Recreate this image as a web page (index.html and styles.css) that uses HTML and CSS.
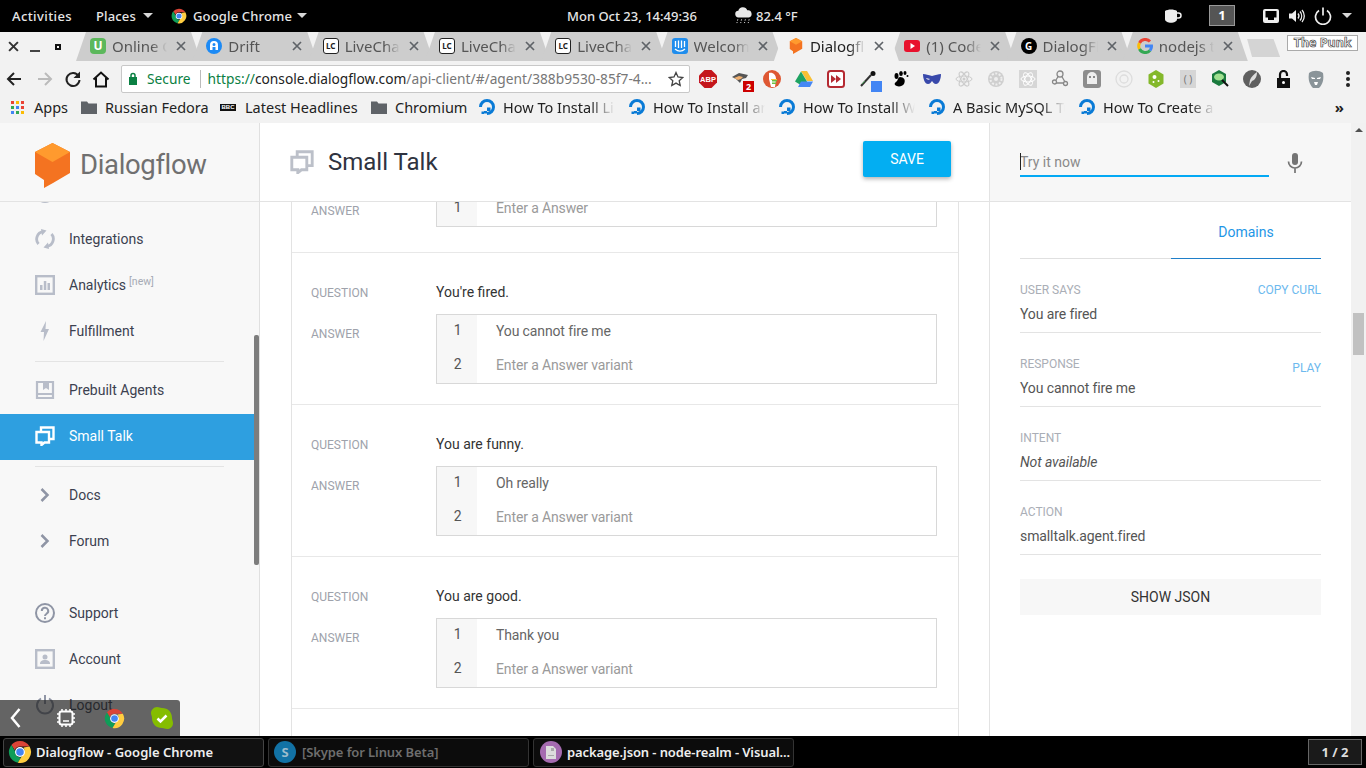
FILE: index.html
```html
<!DOCTYPE html>
<html lang="en">
<head>
<meta charset="utf-8">
<title>Dialogflow - Google Chrome</title>
<link rel="stylesheet" href="styles.css">
</head>
<body>
<svg class="sprite" xmlns="http://www.w3.org/2000/svg">
  <symbol id="chrome" viewBox="0 0 24 24">
    <path fill="#db4437" d="M12 1a11 11 0 0 1 9.5 5.5H12a5.5 5.5 0 0 0-5.2 3.7L3.4 5A11 11 0 0 1 12 1z"/>
    <path fill="#0f9d58" d="M3.4 5l4 6.9a5 5 0 0 0 5.6 5.6L9.800 22.800A11 11 0 0 1 3.400 5z"/>
    <path fill="#ffcd40" d="M21.500 6.500A11 11 0 0 1 9.800 22.800l4.700-7.900A5.500 5.500 0 0 0 15.500 7.500z"/>
    <circle cx="12" cy="12" r="5" fill="#fff"/><circle cx="12" cy="12" r="3.800" fill="#4285f4"/>
  </symbol>
  <symbol id="ocean" viewBox="0 0 18 18">
    <path fill="none" stroke="#0a7bd6" stroke-width="3" d="M9 15.500A6.500 6.500 0 1 0 2.500 9"/>
    <path fill="#0a7bd6" d="M9 9.500h3.500V13H9zM6 13h3v2.500H6zM3.500 13.500H6V16H3.500z"/>
  </symbol>
  <symbol id="folder" viewBox="0 0 16 14"><path fill="#5f6368" d="M0 1.500h6l1.500 2H16V14H0z"/></symbol>
  <symbol id="talk" viewBox="0 0 20 20">
    <path fill="none" stroke="currentColor" stroke-width="2.400" d="M6 5V1.500h12.500V13H15"/>
    <path fill="none" stroke="currentColor" stroke-width="2.400" d="M1.500 6H14v10.500H9.500L6.500 19v-2.500h-5z"/>
  </symbol>
  <symbol id="cross" viewBox="0 0 10 10"><path fill="none" stroke="#5f6368" stroke-width="1.700" d="M1 1l8 8M9 1L1 9"/></symbol>
  <symbol id="skypeg" viewBox="0 0 24 24"><path fill="currentColor" d="M7 1c2 0 3 1 5 1 6 0 10 4 10 10 0 2 1 3 1 5 0 4-3 6-6 6-2 0-3-1-5-1C6 22 2 18 2 12 2 10 1 9 1 7c0-3 3-6 6-6z"/></symbol>
</svg>

<header class="topbar">
  <div class="top-left">
    <span class="top-activities">Activities</span>
    <span class="top-places">Places<i class="caret"></i></span>
    <span class="top-app"><svg class="i16"><use href="#chrome"/></svg>Google Chrome<i class="caret caret-app"></i></span>
  </div>
  <div class="top-clock">Mon Oct 23, 14:49:36</div>
  <div class="top-weather">
    <svg class="i-weather" viewBox="0 0 20 18"><path fill="#e8e8e8" d="M5 11a3.500 3.500 0 0 1-.5-7A5 5 0 0 1 14 3.500 3.800 3.800 0 0 1 15.500 11z"/><path stroke="#ddd" stroke-dasharray="1.500 1.500" d="M4 13l-1 4M8 13l-1 4M12 13l-1 4M16 13l-1 4"/></svg>
    <span>82.4 °F</span>
  </div>
  <div class="top-right">
    <svg class="i-cup" viewBox="0 0 18 16"><path fill="#eee" d="M1 3c3-2 9-2 12 0v8c0 5-12 5-12 0z"/><path fill="none" stroke="#eee" stroke-width="1.500" d="M13 5h1.500a2 2 0 0 1 0 5H13"/></svg>
    <span class="workspace">1</span>
    <svg class="i-net" viewBox="0 0 16 16"><rect y="1" width="16" height="14" rx="2" fill="#eee"/><path fill="#000" d="M2.500 3h11v6.500H11V12H5V9.500H2.500z"/></svg>
    <svg class="i-vol" viewBox="0 0 16 16"><path fill="#eee" d="M0 5.500h3L7 2v12L3 10.500H0z"/><path fill="none" stroke="#eee" stroke-width="1.300" d="M9 5.500a4 4 0 0 1 0 5M11 3.500a7 7 0 0 1 0 9M13 2a9 9 0 0 1 0 12"/></svg>
    <svg class="i-pow" viewBox="0 0 18 18"><path fill="none" stroke="#eee" stroke-width="1.700" d="M5 3.500a7.500 7.500 0 1 0 8 0M9 .5v8"/></svg>
    <i class="caret"></i>
  </div>
</header>

<div class="tabstrip">
  <div class="win-controls">
    <svg class="ctl-x" viewBox="0 0 10 10"><path fill="none" stroke="#333" stroke-width="1.800" d="M1 1l8 8M9 1L1 9"/></svg>
    <span class="ctl-min"></span>
    <span class="ctl-max"></span>
  </div>
  <div class="tabs">
    <div class="tab"><span class="fav fav-u">U</span><span class="tab-title">Online Chat</span><svg class="close"><use href="#cross"/></svg></div>
    <div class="tab"><svg class="fav" viewBox="0 0 16 16"><circle cx="8" cy="8" r="8" fill="#1c8af5"/><path fill="#fff" d="M8 3a4 4 0 0 1 4 4v5H9.500V9h-3v3H4V7a4 4 0 0 1 4-4zm0 2a1.500 1.500 0 1 0 0 3 1.500 1.500 0 0 0 0-3z"/></svg><span class="tab-title">Drift</span><svg class="close"><use href="#cross"/></svg></div>
    <div class="tab"><span class="fav fav-lc">LC</span><span class="tab-title">LiveChat</span><svg class="close"><use href="#cross"/></svg></div>
    <div class="tab"><span class="fav fav-lc">LC</span><span class="tab-title">LiveChat</span><svg class="close"><use href="#cross"/></svg></div>
    <div class="tab"><span class="fav fav-lc">LC</span><span class="tab-title">LiveChat</span><svg class="close"><use href="#cross"/></svg></div>
    <div class="tab"><svg class="fav" viewBox="0 0 16 16"><rect width="16" height="16" rx="3" fill="#1f8ded"/><path fill="none" stroke="#fff" stroke-width="1.300" d="M3.500 3v6M6.500 2.500v7.500M9.500 2.500v7.500M12.500 3v6M3 11c3 2.500 7 2.500 10 0"/></svg><span class="tab-title">Welcome</span><svg class="close"><use href="#cross"/></svg></div>
    <div class="tab tab-active"><svg class="fav" viewBox="0 0 35 45"><path fill="#f47321" d="M17.500 0L35 9v21l-17 10L9 45v-8L0 31V9z"/><path fill="#ff9a2e" d="M17.500 0L35 9 17.500 19 0 9z"/></svg><span class="tab-title">Dialogflow</span><svg class="close"><use href="#cross"/></svg></div>
    <div class="tab"><svg class="fav" viewBox="0 0 16 16"><rect y="2" width="16" height="12" rx="3" fill="#e8112d"/><path fill="#fff" d="M6.500 5l4.500 3-4.500 3z"/></svg><span class="tab-title">(1) Code</span><svg class="close"><use href="#cross"/></svg></div>
    <div class="tab"><span class="fav fav-g">G</span><span class="tab-title">DialogFlow</span><svg class="close"><use href="#cross"/></svg></div>
    <div class="tab"><svg class="fav" viewBox="0 0 16 16"><path fill="none" stroke="#ea4335" stroke-width="3" d="M13 3.500A6.500 6.500 0 0 0 2.500 5"/><path fill="none" stroke="#fbbc05" stroke-width="3" d="M2.500 5a6.500 6.500 0 0 0 0 6"/><path fill="none" stroke="#34a853" stroke-width="3" d="M2.500 11A6.500 6.500 0 0 0 13 12.500"/><path fill="none" stroke="#4285f4" stroke-width="3" d="M13 12.500A6.500 6.500 0 0 0 14.500 8H8"/></svg><span class="tab-title">nodejs tutorial</span><svg class="close"><use href="#cross"/></svg></div>
  </div>
  <span class="newtab"></span>
  <span class="punk">The Punk</span>
</div>

<div class="toolbar">
  <span class="tool"><svg class="i18" viewBox="0 0 18 18"><path fill="none" stroke="#222" stroke-width="2" d="M16 9H3M9 3L3 9l6 6"/></svg></span>
  <span class="tool"><svg class="i18" viewBox="0 0 18 18"><path fill="none" stroke="#bbb" stroke-width="2" d="M2 9h13M9 3l6 6-6 6"/></svg></span>
  <span class="tool"><svg class="i18" viewBox="0 0 18 18"><path fill="none" stroke="#222" stroke-width="2" d="M14.500 6A6.500 6.500 0 1 0 15.500 10"/><path fill="#222" d="M16 1.500V8h-6.500z"/></svg></span>
  <span class="tool"><svg class="i18" viewBox="0 0 18 18"><path fill="none" stroke="#111" stroke-width="2" d="M1.500 9.500L9 2.500l7.500 7M4 8v8.500h10V8"/></svg></span>
  <div class="omnibox">
    <svg class="lock" viewBox="0 0 10 13"><path fill="#0b8043" d="M1 5h8v8H1z"/><path fill="none" stroke="#0b8043" stroke-width="1.500" d="M3 5V3.500a2 2 0 0 1 4 0V5"/></svg>
    <span class="secure">Secure</span>
    <span class="omni-sep"></span>
    <span class="url"><span class="url-https">https://</span><span class="url-host">console.dialogflow.com</span>/api-client/#/agent/388b9530-85f7-4...</span>
    <svg class="star" viewBox="0 0 16 16"><path fill="none" stroke="#444" stroke-width="1.300" d="M8 1.500l2 4.500 4.800.5-3.600 3.200 1 4.800L8 12.100l-4.200 2.400 1-4.800L1.200 6.500 6 6z"/></svg>
  </div>
  <div class="exts">
    <span class="ext"><svg class="i18x" viewBox="0 0 18 18"><path fill="#c4161c" d="M5.500 0h7L18 5.500v7L12.500 18h-7L0 12.500v-7z"/><text class="abp" x="9" y="12">ABP</text></svg></span>
    <span class="ext"><svg class="i18x" viewBox="0 0 18 18"><path fill="#555" d="M1 7l7-4 9 2-2 3-4 1-2 4-4-4z"/><path fill="#f0b070" d="M3 8l5-2 4 1-2 2-3 1z"/></svg><span class="badge">2</span></span>
    <span class="ext"><svg class="i18x" viewBox="0 0 18 18"><circle cx="9" cy="9" r="9" fill="#de5833"/><path fill="#fff" d="M6 3c4-1 7 2 7 6l-1 8H8L6 9z"/><path fill="#6cbf43" d="M9 10h5v1.500H9zM9 12.500h4V14H9z"/><path fill="#f5c33b" d="M8 9h6v1H8z"/></svg></span>
    <span class="ext"><svg class="i18x" viewBox="0 0 18 16"><path fill="#f8c034" d="M6 0h6l6 10h-6z"/><path fill="#1ea362" d="M6 0l6 10-3 5.500L0 10z" transform="translate(0 .5)"/><path fill="#4687f4" d="M3 16l3-5.500h12L15 16z"/></svg></span>
    <span class="ext"><svg class="i18x" viewBox="0 0 18 18"><rect x="1" y="1" width="16" height="16" rx="2.500" fill="#fff" stroke="#b52a32" stroke-width="2"/><path fill="#b52a32" d="M4 5l5 4-5 4zM9 5l5 4-5 4z"/></svg></span>
    <span class="ext ext-dropper"><svg class="i18x" viewBox="0 0 18 18"><path fill="none" stroke="#333" stroke-width="2" d="M2 16L12 5"/><path stroke="#3f8f4e" d="M3 14L6 11"/><circle cx="14" cy="3.500" r="2.500" fill="#111"/></svg><span class="blue-sq"></span></span>
    <span class="ext"><svg class="i18x" viewBox="0 0 18 18"><path fill="#000" d="M9 7c4 0 6 3 4 7-2 3-7 3-9 1-1-2 1-3 2-4s1-4 3-4z"/><ellipse cx="5.500" cy="6" rx="2" ry="3"/><ellipse cx="10" cy="3.500" rx="1.800" ry="2.500"/><ellipse cx="14" cy="3" rx="1.500" ry="2"/><circle cx="16.500" cy="6" r="1"/></svg></span>
    <span class="ext"><svg class="i18x" viewBox="0 0 18 12"><path fill="#3949ab" d="M0 1c3 0 5 1 9 2 4-1 6-2 9-2 0 5-2 10-5 10-2 0-3-2-4-3-1 1-2 3-4 3C2 11 0 6 0 1zm3 4c1 2 3 2 4 1zm12 0c-1 2-3 2-4 1z"/></svg></span>
    <span class="ext ext-faded"><svg class="i18x" viewBox="0 0 18 18"><g fill="none" stroke="#ccc"><ellipse cx="9" cy="9" rx="8" ry="3"/><ellipse cx="9" cy="9" rx="8" ry="3" transform="rotate(60 9 9)"/><ellipse cx="9" cy="9" rx="8" ry="3" transform="rotate(120 9 9)"/></g><circle cx="9" cy="9" r="1.500" fill="#ccc"/></svg></span>
    <span class="ext"><svg class="i18x" viewBox="0 0 18 18"><circle cx="9" cy="9" r="8" fill="#cfcfcf"/><circle cx="9" cy="9" r="5.500" fill="none" stroke="#eee" stroke-width="2" stroke-dasharray="2 1.500"/><circle cx="9" cy="9" r="2" fill="#eee"/></svg></span>
    <span class="ext"><svg class="i18x" viewBox="0 0 18 18"><rect width="18" height="18" fill="#d6d6d6"/><g fill="none" stroke="#fff"><ellipse cx="9" cy="9" rx="7" ry="3"/><ellipse cx="9" cy="9" rx="7" ry="3" transform="rotate(60 9 9)"/><ellipse cx="9" cy="9" rx="7" ry="3" transform="rotate(120 9 9)"/></g></svg></span>
    <span class="ext"><svg class="i18x" viewBox="0 0 18 18"><g fill="#f0f0f0" stroke="#888" stroke-width="1.300"><path d="M5 10L8 5M10 5l4 7M5 13h7" fill="none"/><circle cx="9" cy="4" r="3"/><circle cx="3.500" cy="12" r="2"/><circle cx="14.500" cy="13.500" r="2"/></g></svg></span>
    <span class="ext"><svg class="i18x" viewBox="0 0 18 18"><rect width="18" height="18" rx="3" fill="#8d8d8d"/><path fill="#eee" d="M4 14V7a5 5 0 0 1 10 0v7z"/><circle cx="7" cy="7" r="1" fill="#666"/><circle cx="11" cy="7" r="1" fill="#666"/></svg></span>
    <span class="ext"><svg class="i18x" viewBox="0 0 18 18"><g fill="none" stroke="#ddd" stroke-width="1.300"><circle cx="9" cy="9" r="8"/><circle cx="9" cy="9" r="4"/></g></svg></span>
    <span class="ext"><svg class="i18x" viewBox="0 0 18 18"><path fill="#84b82b" d="M9 0l7.500 4.500v9L9 18l-7.500-4.500v-9z"/><circle cx="7.500" cy="7" r="2" fill="#fff"/><circle cx="11.500" cy="11" r="1" fill="#fff"/><circle cx="6.500" cy="12" r="1" fill="#fff"/></svg></span>
    <span class="ext"><span class="ext-paren">( )</span></span>
    <span class="ext"><svg class="i18x" viewBox="0 0 18 18"><path fill="#1a7a3e" d="M8 0l7 4v8l-7 4-7-4V4z"/><ellipse cx="8" cy="7" rx="5" ry="3.500" fill="#9fe08f"/><path stroke="#111" stroke-width="2" d="M11 10l6 6"/></svg></span>
    <span class="ext"><svg class="i18x" viewBox="0 0 18 18"><circle cx="9" cy="9" r="9" fill="#5f5f5f"/><path fill="#ddd" d="M14 2c0 5-2 8-5 9l-3 5 1-6c1-3 4-6 7-8z"/></svg></span>
    <span class="ext"><svg class="i18x" viewBox="0 0 14 18"><path fill="#111" d="M0 8h13v10H0z"/><path fill="none" stroke="#111" stroke-width="2.200" d="M3 8V4.500a3.500 3.500 0 0 1 7 0V6"/><circle cx="6.500" cy="12.500" r="1.500" fill="#fff"/></svg></span>
    <span class="ext"><svg class="i18x" viewBox="0 0 16 18"><path fill="#8a9499" d="M1 3c4-3 10-3 14 0 1 6 0 11-4 15H5C1 14 0 9 1 3z"/><path fill="#fff" d="M3 7l4 1v1H4zM13 7l-4 1v1h3zM6 12h4l-1 3H7z"/></svg></span>
    <span class="ext"><span class="kebab"></span></span>
  </div>
</div>

<nav class="bookmarks">
  <span class="bm bm-apps"><svg class="apps" viewBox="0 0 13 13"><g fill="#ea4335"><rect width="3" height="3"/><rect x="10" width="3" height="3"/></g><rect x="5" width="3" height="3" fill="#fbbc05"/><rect y="5" width="3" height="3" fill="#34a853"/><rect x="5" y="5" width="3" height="3" fill="#4285f4"/><rect x="10" y="5" width="3" height="3" fill="#ea4335"/><rect y="10" width="3" height="3" fill="#4285f4"/><rect x="5" y="10" width="3" height="3" fill="#34a853"/><rect x="10" y="10" width="3" height="3" fill="#fbbc05"/></svg>Apps</span>
  <span class="bm bm-ru"><svg class="i-fold"><use href="#folder"/></svg>Russian Fedora</span>
  <span class="bm bm-bbc"><span class="bbc">BBC</span>Latest Headlines</span>
  <span class="bm bm-ch"><svg class="i-fold"><use href="#folder"/></svg>Chromium</span>
  <span class="bm bm-do"><svg class="i-do"><use href="#ocean"/></svg><span class="bm-fade">How To Install Linux</span></span>
  <span class="bm bm-do"><svg class="i-do"><use href="#ocean"/></svg><span class="bm-fade">How To Install and Use</span></span>
  <span class="bm bm-do"><svg class="i-do"><use href="#ocean"/></svg><span class="bm-fade">How To Install WordPress</span></span>
  <span class="bm bm-do"><svg class="i-do"><use href="#ocean"/></svg><span class="bm-fade">A Basic MySQL Tutorial</span></span>
  <span class="bm bm-do"><svg class="i-do"><use href="#ocean"/></svg><span class="bm-fade">How To Create a New</span></span>
  <span class="bm-more">»</span>
</nav>

<main class="page">
  <aside class="sidebar">
    <div class="brand">
      <svg class="logo" viewBox="0 0 35 45"><path fill="#f47321" d="M17.500 0L35 9v21l-17 10L9 45v-8L0 31V9z"/><path fill="#ff9a2e" d="M17.500 0L35 9 17.500 19 0 9z"/></svg>
      <span class="brand-name">Dialogflow</span>
    </div>
    <div class="nav-clip">
      <ul class="nav">
        <li class="nav-item"><svg class="nav-ic" viewBox="0 0 20 20"><circle cx="10" cy="10" r="9" fill="none" stroke="currentColor" stroke-width="2"/></svg>Training</li>
        <li class="nav-item"><svg class="nav-ic" viewBox="0 0 20 20"><path fill="none" stroke="currentColor" stroke-width="2.800" d="M3.500 15A7.500 7.500 0 0 1 8 2.700M16.500 5a7.500 7.500 0 0 1-4.500 12.300"/><path fill="currentColor" d="M6 0l5.500 1.500-4.500 5zM14 20l-5.500-1.500 4.500-5z"/></svg>Integrations</li>
        <li class="nav-item"><svg class="nav-ic" viewBox="0 0 20 20"><rect x="1.200" y="1.200" width="17.600" height="17.600" fill="none" stroke="currentColor" stroke-width="2.400"/><path fill="currentColor" d="M5 10h2.500v5H5zM8.800 6h2.500v9H8.800zM12.500 8H15v7h-2.500z"/></svg>Analytics<sup class="new">[new]</sup></li>
        <li class="nav-item"><svg class="nav-ic" viewBox="0 0 20 20"><path fill="currentColor" d="M11 0L5.500 11H9l-.5 9L14 8h-3.500z"/></svg>Fulfillment</li>
        <li class="nav-div nav-div-a"></li>
        <li class="nav-item nav-prebuilt"><svg class="nav-ic" viewBox="0 0 20 20"><path fill="none" stroke="currentColor" stroke-width="2.200" d="M2 2h16v16H2zM2 14h16"/><path fill="currentColor" d="M8 1h6v9l-3-2-3 2z"/></svg>Prebuilt Agents</li>
        <li class="nav-item nav-active"><svg class="nav-ic"><use href="#talk"/></svg>Small Talk</li>
        <li class="nav-div nav-div-b"></li>
        <li class="nav-item"><svg class="nav-ic nav-chev" viewBox="0 0 20 20"><path fill="none" stroke="currentColor" stroke-width="2.500" d="M6.500 4l6 6-6 6"/></svg>Docs</li>
        <li class="nav-item"><svg class="nav-ic nav-chev" viewBox="0 0 20 20"><path fill="none" stroke="currentColor" stroke-width="2.500" d="M6.500 4l6 6-6 6"/></svg>Forum</li>
        <li class="nav-item nav-support"><svg class="nav-ic nav-chev" viewBox="0 0 20 20"><circle cx="10" cy="10" r="9" fill="none" stroke="currentColor" stroke-width="2"/><path fill="none" stroke="currentColor" stroke-width="2" d="M6.800 8a3.200 3.200 0 1 1 4.800 2.700c-1 .7-1.600 1.200-1.600 2.300"/><path fill="currentColor" d="M9 14.300h2v2H9z"/></svg>Support</li>
        <li class="nav-item"><svg class="nav-ic" viewBox="0 0 20 20"><rect x="1.200" y="1.200" width="17.600" height="17.600" fill="none" stroke="currentColor" stroke-width="2.400"/><circle cx="10" cy="8" r="2.500" fill="currentColor"/><path fill="currentColor" d="M5 15c0-3 2-4 5-4s5 1 5 4z"/></svg>Account</li>
        <li class="nav-item"><svg class="nav-ic nav-chev" viewBox="0 0 20 20"><path fill="none" stroke="currentColor" stroke-width="2" d="M6 3.500a8 8 0 1 0 8 0M10 0v9"/></svg>Logout</li>
      </ul>
    </div>
    <span class="side-thumb"></span>
  </aside>

  <section class="main">
    <div class="main-head">
      <svg class="head-ic"><use href="#talk"/></svg>
      <h1 class="head-title">Small Talk</h1>
      <button class="save">SAVE</button>
    </div>
    <div class="main-clip">
      <div class="card">
        <div class="qa qa-first">
          <div class="qa-label qa-label-a">ANSWER</div>
          <div class="answers">
            <div class="ans"><span class="ans-n">1</span><span class="ans-ph">Enter a Answer</span></div>
          </div>
        </div>
        <div class="qa">
          <div class="qa-label qa-label-q">QUESTION</div><div class="qa-q">You're fired.</div>
          <div class="qa-label qa-label-a">ANSWER</div>
          <div class="answers">
            <div class="ans"><span class="ans-n">1</span><span class="ans-t">You cannot fire me</span></div>
            <div class="ans"><span class="ans-n">2</span><span class="ans-ph">Enter a Answer variant</span></div>
          </div>
        </div>
        <div class="qa">
          <div class="qa-label qa-label-q">QUESTION</div><div class="qa-q">You are funny.</div>
          <div class="qa-label qa-label-a">ANSWER</div>
          <div class="answers">
            <div class="ans"><span class="ans-n">1</span><span class="ans-t">Oh really</span></div>
            <div class="ans"><span class="ans-n">2</span><span class="ans-ph">Enter a Answer variant</span></div>
          </div>
        </div>
        <div class="qa">
          <div class="qa-label qa-label-q">QUESTION</div><div class="qa-q">You are good.</div>
          <div class="qa-label qa-label-a">ANSWER</div>
          <div class="answers">
            <div class="ans"><span class="ans-n">1</span><span class="ans-t">Thank you</span></div>
            <div class="ans"><span class="ans-n">2</span><span class="ans-ph">Enter a Answer variant</span></div>
          </div>
        </div>
        <div class="qa-tail"></div>
      </div>
    </div>
  </section>

  <aside class="tester">
    <div class="try">
      <div class="try-input"><span class="try-caret"></span>Try it now</div>
      <svg class="mic" viewBox="0 0 16 20"><rect x="5" y="0" width="6" height="12" rx="3" fill="#757575"/><path fill="none" stroke="#757575" stroke-width="1.700" d="M1.500 8.500a6.500 6.500 0 0 0 13 0M8 15v5"/></svg>
    </div>
    <div class="test-body">
      <div class="test-tabs"><span class="test-tab-blank"></span><span class="test-tab">Domains</span></div>
      <div class="field"><div class="field-top"><span class="field-label">USER SAYS</span><span class="field-link">COPY CURL</span></div><div class="field-val">You are fired</div></div>
      <div class="field"><div class="field-top"><span class="field-label">RESPONSE</span><span class="field-link field-link-low">PLAY</span></div><div class="field-val">You cannot fire me</div></div>
      <div class="field"><div class="field-top"><span class="field-label">INTENT</span></div><div class="field-val field-em">Not available</div></div>
      <div class="field"><div class="field-top"><span class="field-label">ACTION</span></div><div class="field-val">smalltalk.agent.fired</div></div>
      <button class="json">SHOW JSON</button>
    </div>
  </aside>

  <div class="page-scroll"><i class="page-up"></i><span class="page-thumb"></span></div>

  <div class="tray">
    <svg class="tray-back" viewBox="0 0 11 20"><path fill="none" stroke="#fff" stroke-width="2.500" d="M9.500 1L2 10l7.500 9"/></svg>
    <svg class="tray-chip" viewBox="0 0 18 18"><rect x="2.500" y="2.500" width="13" height="13" rx="2" fill="none" stroke="#fff" stroke-width="2"/><path stroke="#fff" d="M5 0v2M9 0v2M13 0v2M5 16v2M9 16v2M13 16v2M0 5h2M0 9h2M0 13h2M16 5h2M16 9h2M16 13h2M6 12h6" stroke-width="1.500"/></svg>
    <svg class="tray-chrome"><use href="#chrome"/></svg>
    <svg class="tray-skype" viewBox="0 0 24 24"><use href="#skypeg"/><path fill="none" stroke="#fff" stroke-width="2.500" d="M7.500 12.500l3 3 6-6"/></svg>
  </div>
</main>

<footer class="taskbar">
  <div class="task task-on"><svg class="task-ic"><use href="#chrome"/></svg>Dialogflow - Google Chrome</div>
  <div class="task task-dim"><span class="task-sk">S</span>[Skype for Linux Beta]</div>
  <div class="task task-code"><span class="task-vs"><svg class="task-doc" viewBox="0 0 10 13"><path fill="#ddd" d="M0 0h7l3 3v10H0z"/><path fill="#aaa" d="M5 2h3v3H5zM2 9h6v1H2z"/></svg></span>package.json - node-realm - Visual...</div>
  <div class="pager">1 / 2</div>
</footer>
</body>
</html>
```
FILE: styles.css
```css
* { box-sizing: border-box; }
html, body { margin: 0; height: 768px; overflow: hidden; }
body { width: 1366px; display: flex; flex-direction: column; font-family: Roboto, "Liberation Sans", sans-serif; background: #fff; }
svg { display: block; flex: none; }
.sprite { display: none; }
ul { list-style: none; margin: 0; padding: 0; }
button { font-family: inherit; border: 0; cursor: pointer; }

/* GNOME top bar */
.topbar { height: 32px; flex: none; background: #000; color: #e6e6e6; display: flex; align-items: center; padding-bottom: 1px; font: 500 13px "Noto Sans", sans-serif; letter-spacing: .15px; }
.top-left { width: 567px; display: flex; align-items: center; padding-left: 12px; }
.top-activities { width: 84px; letter-spacing: .4px; }
.top-places { width: 75px; display: flex; align-items: center; }
.top-app { display: flex; align-items: center; gap: 6px; }
.caret { display: inline-block; width: 0; height: 0; border: 5px solid transparent; border-top-color: #d8d8d8; border-bottom: 0; margin-left: 7px; }
.caret-app { margin-left: -1px; }
.i16 { width: 16px; height: 16px; }
.top-clock { width: 167px; letter-spacing: 0; }
.top-weather { display: flex; align-items: center; gap: 3px; letter-spacing: 0; }
.i-weather { width: 19px; height: 17px; }
.top-right { margin-left: auto; display: flex; align-items: center; padding-right: 14px; }
.i-cup { width: 18px; height: 16px; margin-right: 27px; }
.workspace { width: 26px; height: 21px; background: #555; border: 1px solid #999; text-align: center; line-height: 19px; color: #fff; font-weight: 700; margin-right: 28px; }
.i-net { width: 16px; height: 16px; margin-right: 10px; }
.i-vol { width: 16px; height: 16px; margin-right: 9px; }
.i-pow { width: 18px; height: 18px; margin-right: 3px; }

/* Tab strip */
.tabstrip { height: 29px; flex: none; background: #f2f2f2; display: flex; align-items: flex-end; color: #444; font: 15px "Noto Sans", sans-serif; }
.win-controls { width: 76px; height: 29px; display: flex; align-items: center; padding-left: 8px; }
.ctl-x { width: 11px; height: 11px; margin-right: 11px; }
.ctl-min { width: 10px; height: 2px; background: #444; margin: 8px 15px 0 0; }
.ctl-max { width: 6px; height: 6px; border: 2px solid #111; }
.tabs { display: flex; height: 29px; }
.tab { width: 125px; height: 29px; margin-right: -8.700px; display: flex; align-items: center; padding: 0 0 2px 14px; background: #cdcdcd; clip-path: polygon(10px 0, calc(100% - 10px) 0, 100% 100%, 0 100%); color: #555; }
.tab-active { background: #f2f2f2; color: #222; position: relative; z-index: 1; }
.fav { width: 16px; height: 16px; flex: none; margin-right: 6px; }
.fav-u { background: #5cb85c; border-radius: 4px; color: #fff; font: 700 12px/16px "Noto Sans", sans-serif; text-align: center; }
.fav-lc { background: #fff; border: 1.500px solid #222; border-radius: 3px; color: #222; font: 700 8px/13px "Noto Sans", sans-serif; text-align: center; }
.fav-g { background: #000; border-radius: 50%; color: #fff; font: 700 10px/16px "Noto Sans", sans-serif; text-align: center; }
.tab-title { width: 55px; overflow: hidden; white-space: nowrap; -webkit-mask-image: linear-gradient(to right, #000 72%, transparent); mask-image: linear-gradient(to right, #000 72%, transparent); }
.close { width: 10px; height: 10px; margin-left: 9px; }
.newtab { width: 33px; height: 18px; margin: 0 7px 4px 8px; background: #d4d4d4; clip-path: polygon(0 0, 80% 0, 100% 100%, 15% 100%); flex: none; }
.punk { width: 71px; height: 16px; margin-bottom: 10px; background: #fff; border: 1px solid #aaa; font: 700 12.500px/13px "Noto Sans", sans-serif; text-align: center; color: #fff; -webkit-text-stroke: .7px #444; white-space: nowrap; flex: none; }

/* Toolbar */
.toolbar { height: 33px; flex: none; background: #f2f2f2; display: flex; align-items: center; padding-top: 2px; }
.tool { width: 28px; height: 28px; display: flex; align-items: center; justify-content: center; }
.tool:first-child { margin-right: 3px; }
.tool:nth-child(4) { margin-right: 6px; }
.i18 { width: 18px; height: 18px; }
.omnibox { width: 569px; height: 28px; background: #fff; border: 1px solid #c8c8c8; border-radius: 2px; display: flex; align-items: center; padding-left: 6px; font: 13.750px "Noto Sans", sans-serif; white-space: nowrap; }
.lock { width: 10px; height: 13px; }
.secure { color: #0b8043; margin-left: 9px; }
.omni-sep { width: 1px; height: 18px; background: #bbb; margin: 0 7px 0 9px; }
.url { color: #777; width: 459px; overflow: hidden; }
.url-https { color: #0b8043; }
.url-host { color: #222; }
.star { width: 16px; height: 16px; margin-left: 1px; }
.exts { display: flex; margin-left: 2px; }
.ext { width: 32px; height: 28px; display: flex; align-items: center; justify-content: center; position: relative; }
.i18x { width: 18px; height: 18px; }
.abp { fill: #fff; font: 700 7.500px "Liberation Sans", sans-serif; text-anchor: middle; }
.badge { position: absolute; left: 19px; top: 16px; width: 11px; height: 11px; background: #c00; color: #fff; font: 700 9px/11px "Noto Sans", sans-serif; text-align: center; }
.blue-sq { position: absolute; left: 19px; top: 16px; width: 11px; height: 11px; background: #4285f4; }
.ext-paren { width: 16px; height: 18px; background: #d6d6d6; color: #777; font: 10px/18px "Noto Sans", sans-serif; text-align: center; }
.kebab { width: 4px; height: 4px; background: #222; border-radius: 50%; box-shadow: 0 -6px 0 #222, 0 6px 0 #222; }

/* Bookmarks */
.bookmarks { height: 29px; flex: none; background: #f2f2f2; display: flex; align-items: center; padding-bottom: 3px; font: 14.500px "Noto Sans", sans-serif; color: #222; white-space: nowrap; }
.bm { display: flex; align-items: center; flex: none; }
.apps { width: 13px; height: 13px; margin-right: 10px; }
.bm-apps { width: 81px; padding-left: 11px; }
.i-fold { width: 16px; height: 14px; margin-right: 8px; }
.bm-ru { width: 139px; }
.bbc { width: 16px; height: 7px; background: #111; color: #fff; font: 700 6px/7px "Liberation Sans", sans-serif; margin-right: 9px; text-align: center; }
.bm-bbc { width: 151px; }
.bm-ch { width: 107px; }
.bm-do { width: 150px; }
.i-do { width: 18px; height: 18px; margin-right: 7px; }
.bm-fade { width: 112px; overflow: hidden; -webkit-mask-image: linear-gradient(to right, #000 78%, transparent); mask-image: linear-gradient(to right, #000 78%, transparent); }
.bm-more { margin-left: auto; padding-right: 22px; font-size: 15px; font-weight: 700; }

/* Page */
.page { flex: 1; min-height: 0; display: flex; position: relative; overflow: hidden; background: #fff; }
.sidebar { width: 260px; flex: none; background: #f8f8f8; border-right: 1px solid #e0e0e0; display: flex; flex-direction: column; position: relative; }
.brand { height: 79px; flex: none; border-bottom: 1px solid #e3e3e3; display: flex; align-items: center; padding: 6px 0 0 35px; gap: 10px; }
.logo { width: 35px; height: 45px; }
.brand-name { font: 400 27.500px Roboto, sans-serif; color: #707070; letter-spacing: -.35px; margin-top: -1px; }
.nav-clip { flex: 1; min-height: 0; overflow: hidden; }
.nav { margin-top: -32px; color: #3c4150; font-size: 14px; }
.nav-item { height: 46px; display: flex; align-items: center; padding-left: 35px; }
.nav-ic { width: 20px; height: 20px; margin-right: 14px; color: #b8bdc9; }
.nav-chev { color: #8f95a5; }
.new { color: #a6abb5; font-size: 10.500px; align-self: flex-start; margin: 14px 0 0 3px; line-height: 1.200; }
.nav-div { height: 1px; background: #e4e4e4; margin: 0 35px; }
.nav-div-a { margin-top: 7px; }
.nav-prebuilt { margin-top: 5px; margin-bottom: 1px; }
.nav-active { background: #2e9fe0; color: #fff; padding-bottom: 2px; }
.nav-active .nav-ic { color: #fff; }
.nav-div-b { margin-top: 6px; margin-bottom: 5px; }
.nav-support { margin-top: 26px; }
.side-thumb { position: absolute; left: 254px; top: 212px; width: 5px; height: 230px; background: #7d7d7d; border-radius: 2px; }

.main { width: 729px; flex: none; display: flex; flex-direction: column; }
.main-head { height: 79px; flex: none; border-bottom: 1px solid #e3e3e3; display: flex; align-items: center; padding: 0 38px 0 30px; }
.head-ic { width: 24px; height: 24px; color: #bcc0c9; }
.head-title { margin: 0 0 0 14px; font: 400 24px Roboto, sans-serif; color: #2f3340; }
.save { margin-left: auto; margin-top: -7px; width: 88px; height: 36px; background: #03aef2; color: #fff; font-size: 14px; border-radius: 2px; box-shadow: 0 2px 4px rgba(0,0,0,.3); }
.main-clip { flex: 1; min-height: 0; overflow: hidden; padding-left: 31px; }
.card { width: 668px; border-left: 1px solid #e3e3e3; border-right: 1px solid #e3e3e3; margin-top: -11px; }
.qa { display: grid; grid-template-columns: 125px 501px; padding: 27px 0 20px 19px; border-bottom: 1px solid #e8e8e8; }
.qa-first { padding-top: 0; padding-bottom: 25px; }
.qa-tail { height: 60px; }
.qa-label { font-size: 12px; color: #9ea2ab; line-height: 24px; }
.qa-label-q { padding-top: 1px; }
.qa-label-a { padding-top: 8px; }
.qa-q { font-size: 14px; color: #333; line-height: 24px; margin-bottom: 10px; }
.answers { border: 1px solid #d8d8d8; background: linear-gradient(to right, #f7f7f7 40px, #fff 40px); }
.ans { height: 34px; display: flex; align-items: center; font-size: 14px; letter-spacing: -.13px; }
.ans-n { width: 40px; text-align: center; color: #555; padding-left: 1px; margin-top: -4px; }
.ans-t { margin: -2px 0 0 19px; color: #666; }
.ans-ph { margin: -2px 0 0 19px; color: #9a9a9a; }

/* Right panel */
.tester { width: 362px; flex: none; border-left: 1px solid #e3e3e3; display: flex; flex-direction: column; }
.try { height: 79px; flex: none; background: #f7f7f7; border-bottom: 1px solid #e3e3e3; display: flex; align-items: center; padding-left: 30px; }
.try-input { width: 249px; height: 34px; border-bottom: 2px solid #03a9f4; font-size: 14px; color: #8a8a8a; line-height: 38px; margin-top: -4px; position: relative; }
.try-caret { position: absolute; left: 0; top: 10px; width: 1px; height: 17px; background: #222; }
.mic { width: 16px; height: 20px; margin: 2px 0 0 18px; }
.test-body { padding: 0 30px; }
.test-tabs { display: flex; height: 57px; }
.test-tab-blank { width: 151px; border-bottom: 1px solid #e0e0e0; }
.test-tab { width: 150px; border-bottom: 1px solid #1f7fc9; color: #1e96e6; font-size: 14px; text-align: center; line-height: 60px; }
.field { height: 74px; border-bottom: 1px solid #e3e3e3; padding-top: 21px; }
.field-top { display: flex; justify-content: space-between; font-size: 12px; line-height: 20px; height: 20px; }
.field-label { color: #aaaeb6; }
.field-link { color: #6db9ee; }
.field-link-low { padding-top: 4px; }
.field-val { font-size: 14px; color: #555; line-height: 24px; margin-top: 2px; letter-spacing: -.1px; }
.field-em { font-style: italic; }
.json { display: block; width: 301px; height: 36px; margin-top: 24px; background: #f7f7f7; font-size: 14px; color: #333; }

.page-scroll { width: 15px; flex: none; background: #f1f1f1; position: relative; }
.page-up { position: absolute; left: 4px; top: 5px; border: 4px solid transparent; border-bottom: 4px solid #505050; border-top: 0; }
.page-thumb { position: absolute; left: 2px; top: 190px; width: 11px; height: 42px; background: #c1c1c1; }

.tray { position: absolute; left: 0; bottom: 0; width: 180px; height: 36px; background: rgba(30,30,30,.68); border-top-right-radius: 3px; display: flex; align-items: center; }
.tray-back { width: 11px; height: 20px; margin: 0 0 0 10px; }
.tray-chip { width: 18px; height: 18px; margin-left: 36px; }
.tray-chrome { width: 21px; height: 21px; margin-left: 29px; }
.tray-skype { width: 24px; height: 24px; margin-left: 25px; color: #85bd00; }

/* Taskbar */
.taskbar { height: 32px; flex: none; background: #000; display: flex; align-items: center; padding: 0 4px 0 3px; gap: 4px; font: 600 13px "Noto Sans", sans-serif; color: #eee; white-space: nowrap; }
.task { width: 261px; height: 29px; background: #0c0c0c; border: 1px solid #333; border-radius: 3px; display: flex; align-items: center; padding-left: 5px; gap: 6px; letter-spacing: -.1px; }
.task-on { background: #111; border-color: #444; padding-left: 4px; gap: 4px; letter-spacing: 0; }
.task-dim { color: #6e6e6e; }
.task-code { padding-left: 6px; gap: 5px; }
.task-ic { width: 24px; height: 24px; }
.task-sk { width: 22px; height: 22px; border-radius: 50%; background: #1272a5; color: #9dbccc; text-align: center; font: 700 13px/22px "Noto Sans", sans-serif; }
.task-vs { width: 22px; height: 22px; border-radius: 50%; background: #a56bb0; display: flex; align-items: center; justify-content: center; }
.task-doc { width: 10px; height: 13px; }
.pager { margin-left: auto; width: 54px; height: 26px; background: #1a1a1a; border: 1px solid #666; text-align: center; line-height: 24px; font-weight: 700; color: #ddd; }
```
